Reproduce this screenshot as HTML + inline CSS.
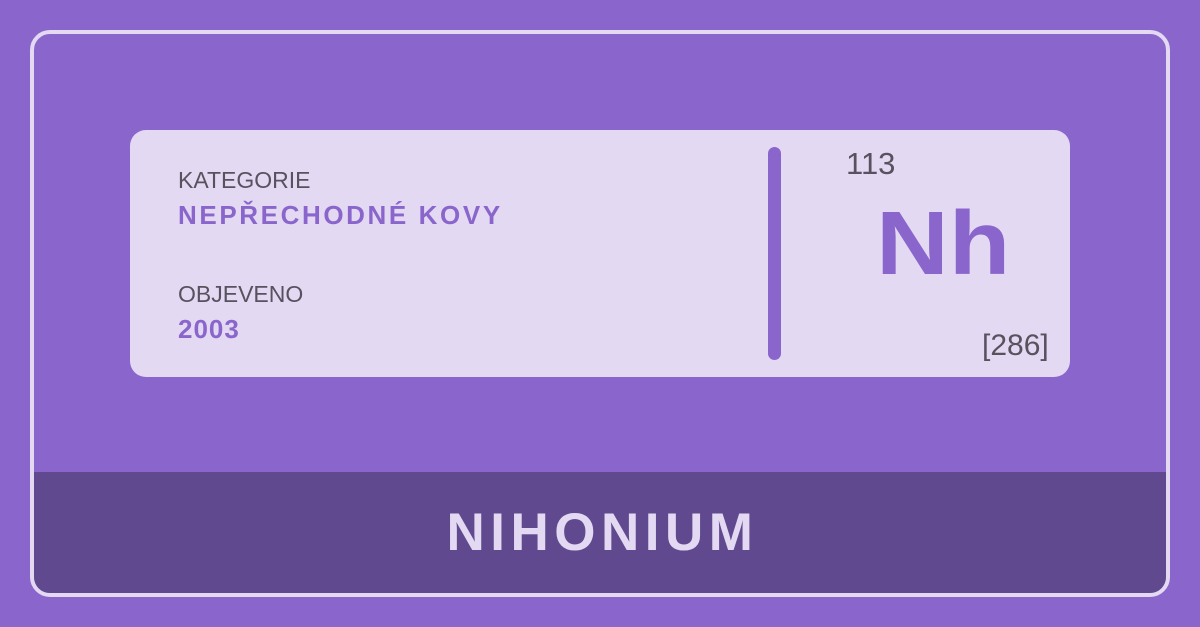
<!DOCTYPE html>
<html><head><meta charset="utf-8"><style>
*{margin:0;padding:0;box-sizing:border-box}
body{width:1200px;height:627px;background:#8a66cc;position:relative;overflow:hidden;font-family:"Liberation Sans",sans-serif}
.frame{position:absolute;left:30px;top:30px;width:1140px;height:567px;border:4px solid #e3d9f3;border-radius:20px;overflow:hidden}
.band{position:absolute;left:0;right:0;top:438px;bottom:0;background:#61498f}
.card{position:absolute;left:130px;top:130px;width:940px;height:247px;background:#e3d9f3;border-radius:16px}
.t{position:absolute;white-space:nowrap}
.lbl{color:#58525e;font-size:23px;left:48px}
.val{color:#8a66cc;font-size:26px;font-weight:bold;left:48px;letter-spacing:2.6px}
.bar{position:absolute;left:638px;top:17px;width:13px;height:213px;background:#8a66cc;border-radius:7px}
</style></head><body>
<div class="frame"><div class="band"></div></div>
<div class="card">
<div class="t lbl" style="top:37px">KATEGORIE</div>
<div class="t val" style="top:70px">NEPŘECHODNÉ KOVY</div>
<div class="t lbl" style="top:151px">OBJEVENO</div>
<div class="t val" style="top:184px;letter-spacing:1px">2003</div>
<div class="bar"></div>
<div class="t" style="left:716px;top:16px;font-size:31px;color:#58525e">113</div>
<div class="t" style="left:746px;top:63px;font-size:90px;font-weight:bold;color:#8a66cc;transform:scaleX(1.12);transform-origin:left">Nh</div>
<div class="t" style="left:852px;top:199px;font-size:30px;color:#58525e">[286]</div>
</div>
<div class="t" style="left:0;width:1200px;text-align:center;top:502px;font-size:53px;font-weight:bold;color:#e3d9f3;letter-spacing:5.5px;padding-left:5px">NIHONIUM</div>
</body></html>
